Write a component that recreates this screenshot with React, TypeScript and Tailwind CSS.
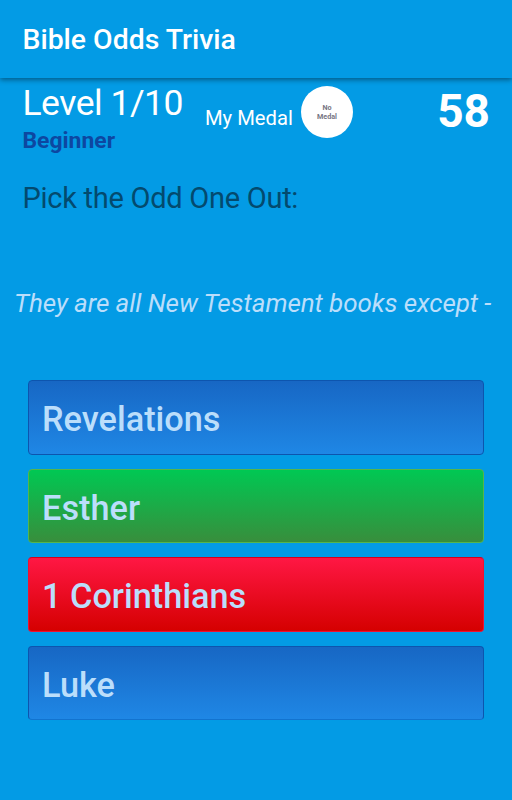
const answers = [
  { label: "Revelations", tone: "border-[#0d55ae] bg-linear-to-b/srgb from-[#1767c4] to-[#1f87e5]" },
  { label: "Esther", tone: "border-[#55b54c] bg-linear-to-b/srgb from-[#00c853] to-[#388e3c]" },
  { label: "1 Corinthians", tone: "border-[#f01030] border-t-[#d5001c] bg-linear-to-b/srgb from-[#ff1744] to-[#d50000]" },
  { label: "Luke", tone: "border-[#0d55ae] border-b-[#1273cf] bg-linear-to-b/srgb from-[#1767c4] to-[#1f87e5]" },
];

export default function App() {
  return (
    <div className="flex h-[800px] w-[512px] flex-col overflow-hidden bg-[#039be5] font-['Roboto',sans-serif]">
      <header className="flex h-[78px] shrink-0 items-center pt-[2px] pl-[22.5px] shadow-[0_2px_5px_rgba(0,0,0,0.4)]">
        <h1 className="text-[28.4px] leading-[36px] font-medium text-white">Bible Odds Trivia</h1>
      </header>
      <section className="flex h-[82px] shrink-0 items-start pl-[22.5px] pr-[22px] text-white">
        <div className="w-[182.5px] pt-[5px]">
          <div className="text-[35.5px] leading-[41px] tracking-[-0.5px] whitespace-nowrap">Level 1/10</div>
          <div className="mt-[4px] text-[22.9px] leading-[26px] font-bold text-[#0d47a1]">Beginner</div>
        </div>
        <div className="pt-[28px] text-[20.2px] leading-[24px] whitespace-nowrap">My Medal</div>
        <div className="mt-[8px] ml-auto flex size-[52px] flex-col items-center justify-center rounded-full bg-white text-[7.2px] leading-[9px] font-bold text-[#777583]">
          <span>No</span>
          <span>Medal</span>
        </div>
        <div className="w-[137px] pt-[6px] text-right text-[46px] leading-[54px] font-bold">58</div>
      </section>
      <h2 className="mt-[20px] pl-[22.5px] text-[29px] leading-[36px] tracking-[-0.27px] text-[#034a6e]">Pick the Odd One Out:</h2>
      <p className="mt-[71px] pl-[14px] text-[26px] leading-[32px] tracking-[-0.07px] whitespace-nowrap text-[#bbdefb] italic">
        They are all New Testament books except -
      </p>
      <div className="mt-[61px] flex flex-col gap-[14px] px-[28px]">
        {answers.map((a) => (
          <button key={a.label} className={`h-[74.5px] rounded-[4px] border pl-[13px] pt-[5px] text-left text-[34.3px] font-medium text-[#bbdefb] ${a.tone}`}>
            {a.label}
          </button>
        ))}
      </div>
    </div>
  );
}
